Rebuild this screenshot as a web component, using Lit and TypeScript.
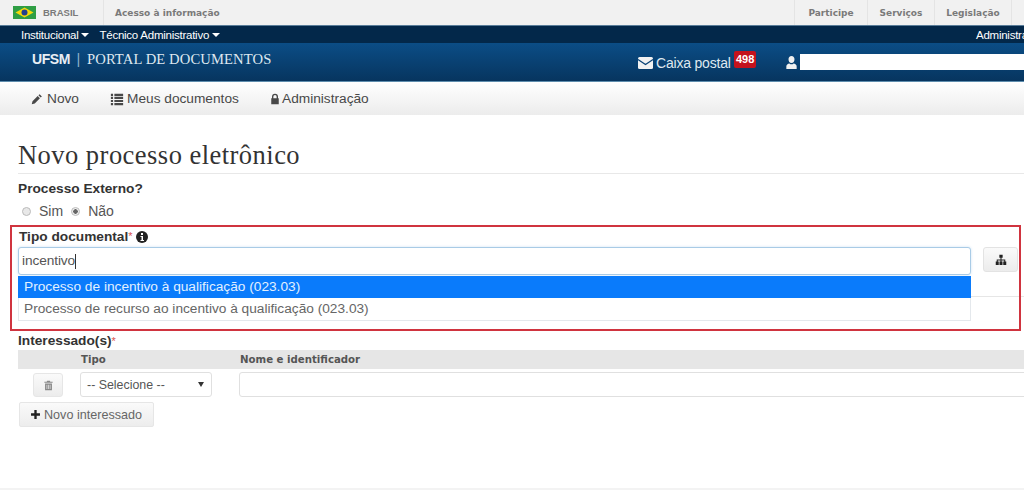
import { LitElement, html, css } from "lit";
import { customElement } from "lit/decorators.js";

const icon = (d: string, cls = "ic", vb = "0 0 16 16") =>
  html`<svg class=${cls} viewBox=${vb} aria-hidden="true"><path d=${d} fill="currentColor"></path></svg>`;

const PENCIL = "M11.5 1.5l3 3-1.6 1.6-3-3zM8.9 4.1l3 3L5 14 1 15l1-4z";
const LIST = "M1 2h2.5v2.5H1zM5 2h10v2.5H5zM1 5.5h2.5V8H1zM5 5.5h10V8H5zM1 9h2.5v2.5H1zM5 9h10v2.5H5zM1 12.5h2.5V15H1zM5 12.5h10V15H5z";
const LOCK = "M8 1a4 4 0 0 0-4 4v2H3v8h10V7h-1V5a4 4 0 0 0-4-4zm-2.2 6V5a2.2 2.2 0 0 1 4.4 0v2z";
const USER = "M8 1c2 0 3.2 1.5 3.2 3.5S10 8.6 8 8.6 4.800 6.500 4.800 4.500 6 1 8 1zM2.500 15v-3c0-1.600 1.500-2.700 3.300-3 .6.6 1.300.9 2.200.9s1.600-.3 2.200-.9c1.800.3 3.300 1.400 3.300 3v3z";
const TREE = "M5.800 1h4.400v4H8.700v2.200h5v2.800H15v4.500h-4V10h1.300V8.600H8.700V10H10v4.500H6V10h1.300V8.600H3.700V10H5v4.500H1V10h1.300V7.200h5V5H5.800z";
const PLUS = "M6.300 1.500h3.400v4.800h4.800v3.400H9.700v4.800H6.300V9.700H1.500V6.300h4.800z";
const TRASH = "M6 1h4l.6 1.500H14V4H2V2.500h3.400zM3 5h10v10H3zm2.200 1.800v6.400h1V6.800zm2.300 0v6.400h1V6.800zm2.300 0v6.400h1V6.800z";

@customElement("app-root")
export class AppRoot extends LitElement {
  static styles = css`
    :host { display: block; width: 1024px; height: 490px; overflow: hidden; position: relative; background: #fff; font-family: "Liberation Sans", Arial, sans-serif; color: #333; }
    * { box-sizing: border-box; }
    .ic { width: 12px; height: 12px; flex: none; }

    .gov { height: 25px; background: #f1f1f1; display: flex; align-items: stretch; font-family: "DejaVu Sans", sans-serif; font-size: 9px; font-weight: 700; color: #7a7a7a; }
    .gov-brand { width: 104px; display: flex; align-items: center; gap: 7px; padding-left: 13px; border-right: 1px solid #e4e4e4; font-family: "Liberation Sans", sans-serif; font-size: 9.500px; }
    .flag { width: 23px; height: 13px; flex: none; }
    .gov-link { display: flex; align-items: center; padding-left: 11px; flex: 1; }
    .gov-right { display: flex; margin-right: 12px; }
    .gov-right span { display: flex; align-items: center; justify-content: center; border-left: 1px solid #e4e4e4; }
    .gov-right span:nth-child(1) { width: 73px; }
    .gov-right span:nth-child(2) { width: 67px; }
    .gov-right span:nth-child(3) { width: 78px; border-right: 1px solid #e4e4e4; }

    .sub { height: 18px; background: #03284a; border-top: 1px solid #5a7d99; color: #fff; font-size: 11.500px; letter-spacing: -.25px; display: flex; align-items: center; padding-left: 21px; gap: 10px; }
    .caret { display: inline-block; width: 0; height: 0; border: 4px solid transparent; border-top-color: currentColor; border-bottom: 0; margin-left: 3px; vertical-align: 2px; }
    .sub-end { margin-left: auto; margin-right: -20px; width: 68px; white-space: nowrap; }

    .head { height: 39px; background: linear-gradient(#0b4d86, #07355f); border-bottom: 1px solid #5f8eae; color: #dfe8f0; display: flex; align-items: flex-start; }
    .logo { margin: 8px 0 0 32px; font-family: "Liberation Serif", serif; font-size: 14.600px; letter-spacing: .12px; width: 606px; white-space: nowrap; }
    .logo b { font-family: "Liberation Sans", sans-serif; font-size: 14px; letter-spacing: -.4px; color: #e8eef4; }
    .logo i { font-style: normal; font-family: "Liberation Sans", sans-serif; font-weight: 300; margin: 0 6.500px; color: #8fb0c9; }
    .mail { margin-top: 12px; display: flex; align-items: center; gap: 3px; font-size: 14px; letter-spacing: -.2px; width: 149px; position: relative; }
    .mail svg { width: 15px; height: 12px; flex: none; }
    .badge { position: absolute; left: 96px; top: -4px; background: #c4121d; color: #fff; font-size: 11px; letter-spacing: 0; font-weight: 700; line-height: 17px; padding: 0 2px; border-radius: 2px; }
    .user { margin: 11px 0 0 -3px; display: flex; align-items: center; flex: 1; gap: 1px; color: #f0f0f0; }
    .user .ic { width: 15px; height: 15px; }
    .user-box { flex: 1; height: 16px; background: #fff; }

    .nav { height: 33px; margin-bottom: 1px; background: linear-gradient(#fff, #ececec); display: flex; align-items: center; font-size: 13.700px; color: #484848; padding-left: 31px; }
    .nav span { display: flex; align-items: center; gap: 4px; }
    .nav span:nth-child(1) { width: 79px; }
    .nav span:nth-child(2) { width: 159px; gap: 3px; }
    .nav span:nth-child(2) .ic { width: 14px; height: 14px; }
    .nav .admin { gap: 1px; }

    main { padding: 0 0 0 18px; }
    h1 { margin: 28px 0 0; height: 31px; border-bottom: 1px solid #e8e8e8; font: 400 26.500px/24px "Liberation Serif", serif; letter-spacing: .47px; color: #333; }
    .lbl { font-size: 13.700px; font-weight: 700; color: #333; line-height: 15px; }
    .ext { margin-top: 7px; }
    .radios { margin: 7px 0 0 4px; display: flex; align-items: center; height: 16px; font-size: 14px; color: #555; }
    .radio { width: 9px; height: 9px; border-radius: 50%; border: 1px solid #bbb; background: #e8e8e8; margin-right: 8px; flex: none; }
    .radio.on { background: radial-gradient(circle, #666 0 2px, #eee 2.500px); margin-left: 8px; margin-right: 8px; }
    .tipo { margin: 10px 0 0 1px; display: flex; align-items: center; height: 15px; }
    .req { color: #d9534f; font-weight: 400; font-size: 11px; align-self: flex-start; }
    .info { width: 12px; height: 12px; margin-left: 3px; color: #222; }
    .row { display: flex; margin-top: 3px; height: 50px; position: relative; border-bottom: 1px solid #e6e6e6; }
    .search { width: 953px; height: 28px; border: 1px solid #a9cbe6; border-radius: 3px; box-shadow: 0 0 3px #cfe3f3; background: #fff; font-size: 13.700px; line-height: 26px; padding-left: 3px; color: #555; display: flex; align-items: center; letter-spacing: -.1px; }
    .cursor { display: inline-block; width: 1px; height: 15px; background: #333; }
    .tree { margin-left: 12px; width: 35px; height: 25px; border: 1px solid #e3e3e3; border-radius: 3px; background: linear-gradient(#fafafa, #ececec); display: flex; align-items: center; justify-content: center; color: #222; }
    .menu { position: absolute; left: 0; top: 29px; width: 953px; height: 45px; background: #fff; border: 1px solid #e4e8ec; border-top: 0; font-size: 13.700px; color: #666; }
    .menu div { height: 22px; line-height: 21px; padding-left: 5px; }
    .menu .sel { background: #0a7bfb; color: #e2f0ff; margin: 0 -1px; padding-left: 6px; }
    .int { margin-top: 36px; }
    .thead { margin-top: 1px; height: 19px; background: #e6e6e6; display: flex; align-items: center; font-family: "DejaVu Sans", sans-serif; font-size: 10.200px; font-weight: 700; color: #555; }
    .thead span:nth-child(1) { margin-left: 63px; width: 159px; }
    .trow { display: flex; align-items: flex-start; margin-top: 3px; }
    .del { margin: 1px 0 0 15px; width: 30px; height: 24px; border: 1px solid #e6e6e6; border-radius: 3px; background: linear-gradient(#fafafa, #ececec); color: #888; display: flex; align-items: center; justify-content: center; }
    .del .ic { width: 11px; height: 13px; }
    .select { margin-left: 17px; width: 132px; height: 25px; border: 1px solid #e0e0e0; border-radius: 3px; display: flex; align-items: center; justify-content: space-between; padding: 0 6px; font-size: 12.400px; color: #555; }
    .select i { width: 0; height: 0; border: 3px solid transparent; border-top: 5px solid #333; border-bottom: 0; margin-right: 1px; }
    .name { margin-left: 27px; flex: 1; height: 25px; margin-right: -4px; border: 1px solid #e0e0e0; border-radius: 3px; }
    .add { margin: 5px 0 0 1px; width: 135px; height: 25px; border: 1px solid #e6e6e6; border-radius: 2px; background: linear-gradient(#fafafa, #ededed); display: flex; align-items: center; padding-left: 10px; gap: 3px; font-size: 12.600px; color: #666; }
    .add .ic { width: 11px; height: 11px; color: #222; }
    .frame { position: absolute; left: 10px; top: 225px; width: 1011px; height: 106px; border: 2px solid #d0343f; pointer-events: none; }
    .foot { position: absolute; left: 0; right: 0; bottom: 0; height: 2px; background: #f3f3f3; }
  `;

  render() {
    return html`
      <div class="gov">
        <div class="gov-brand">
          <svg class="flag" viewBox="0 0 23 13"><rect width="23" height="13" fill="#2f9e44"></rect><path d="M11.500 1.500L20.500 6.500 11.500 11.500 2.500 6.500z" fill="#f5d90a"></path><circle cx="11.500" cy="6.500" r="3" fill="#23408e"></circle></svg>
          <span>BRASIL</span>
        </div>
        <div class="gov-link">Acesso à informação</div>
        <div class="gov-right"><span>Participe</span><span>Serviços</span><span>Legislação</span></div>
      </div>
      <div class="sub">
        <span>Institucional<i class="caret"></i></span>
        <span>Técnico Administrativo<i class="caret"></i></span>
        <span class="sub-end">Administração</span>
      </div>
      <div class="head">
        <div class="logo"><b>UFSM</b><i>|</i>PORTAL DE DOCUMENTOS</div>
        <div class="mail">
          <svg viewBox="0 0 15 12"><rect width="15" height="12" rx="1.500" fill="#f2f2f2"></rect><path d="M0 2.500l7.500 5 7.500-5" fill="none" stroke="#0a4276" stroke-width="1.200"></path></svg>
          <span>Caixa postal</span><span class="badge">498</span>
        </div>
        <div class="user">${icon(USER)}<div class="user-box"></div></div>
      </div>
      <div class="nav">
        <span>${icon(PENCIL)}Novo</span>
        <span>${icon(LIST)}Meus documentos</span>
        <span class="admin">${icon(LOCK)}Administração</span>
      </div>
      <main>
        <h1>Novo processo eletrônico</h1>
        <div class="lbl ext">Processo Externo?</div>
        <div class="radios"><i class="radio"></i>Sim<i class="radio on"></i>Não</div>
        <div class="lbl tipo">Tipo documental<span class="req">*</span>
          <svg class="info" viewBox="0 0 12 12"><circle cx="6" cy="6" r="6" fill="currentColor"></circle><rect x="5" y="2" width="2" height="2" fill="#fff"></rect><path d="M4.500 5h2.500v4h1v1H4.500V9h1V6h-1z" fill="#fff"></path></svg>
        </div>
        <div class="row">
          <div class="search">incentivo<i class="cursor"></i></div>
          <div class="tree">${icon(TREE)}</div>
          <div class="menu">
            <div class="sel">Processo de incentivo à qualificação (023.03)</div>
            <div>Processo de recurso ao incentivo à qualificação (023.03)</div>
          </div>
        </div>
        <div class="lbl int">Interessado(s)<span class="req">*</span></div>
        <div class="thead"><span>Tipo</span><span>Nome e identificador</span></div>
        <div class="trow">
          <div class="del">${icon(TRASH)}</div>
          <div class="select"><span>-- Selecione --</span><i></i></div>
          <div class="name"></div>
        </div>
        <div class="add">${icon(PLUS)}Novo interessado</div>
      </main>
      <div class="frame"></div>
      <div class="foot"></div>
    `;
  }
}
